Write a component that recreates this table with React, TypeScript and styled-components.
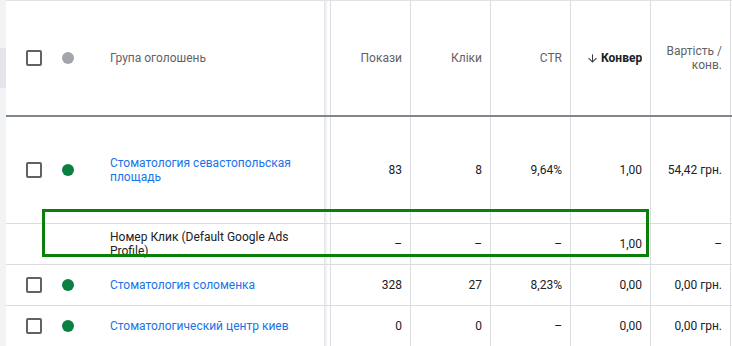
import React from 'react';
import styled, { createGlobalStyle } from 'styled-components';

const Global = createGlobalStyle`
  *, *::before, *::after { box-sizing: border-box; }
  html, body { margin: 0; padding: 0; background: #fff; }
  body { font-family: Roboto, "Noto Sans", Arial, sans-serif; }
`;

const COLS = '50px 54px 214px 6px repeat(5, 80px) 1fr';

const Page = styled.div`
  position: relative;
  display: flex;
  width: 732px;
  height: 346px;
  overflow: hidden;
  background: #fff;
`;

const Rail = styled.div`
  flex: none;
  width: 6px;
  background: #f1f3f4;
  display: flex;
  flex-direction: column;
  padding-top: 48px;
`;

const RailThumb = styled.div`
  height: 40px;
  background: #e4e6e9;
`;

const Table = styled.div`
  flex: 1;
  display: flex;
  flex-direction: column;
  border-top: 1px solid #e0e2e5;
  min-width: 0;
`;

const Row = styled.div<{ $h: number; $header?: boolean }>`
  flex: none;
  display: grid;
  grid-template-columns: ${COLS};
  height: ${(p) => p.$h}px;
  border-bottom: ${(p) => (p.$header ? '2px solid #80868b' : '1px solid #dadce0')};
  font-size: 12px;
  line-height: 14px;
  color: ${(p) => (p.$header ? '#5f6368' : '#202124')};
`;

const Cell = styled.div`
  display: flex;
  align-items: center;
  min-width: 0;
`;

const CheckCell = styled(Cell)`
  padding-left: 20px;
`;

const Checkbox = styled.span`
  display: block;
  width: 16px;
  height: 16px;
  border: 2px solid #5f6368;
  border-radius: 2px;
`;

const DotCell = styled(Cell)`
  padding-left: 6px;
`;

const Dot = styled.span<{ $color: string }>`
  display: block;
  width: 12px;
  height: 12px;
  border-radius: 50%;
  background: ${(p) => p.$color};
`;

const NameCell = styled(Cell)`
  padding-right: 16px;
`;

const NameLink = styled.span`
  color: #1a73e8;
`;

const FrozenEdge = styled.div`
  background: linear-gradient(to right, #e3e5e8 0px, #eef0f1 2px, #f8f9fa 3px, #fff 4px);
`;

const Metric = styled(Cell)<{ $padLeft?: number }>`
  border-left: 1px solid #dadce0;
  justify-content: flex-end;
  text-align: right;
  padding: 0 8px 0 ${(p) => p.$padLeft ?? 8}px;
`;

const Tail = styled.div`
  border-left: 1px solid #dadce0;
`;

const SortLabel = styled.span`
  display: flex;
  align-items: center;
  gap: 2px;
  min-width: 0;
  color: #202124;
  font-weight: 700;
`;

const SortText = styled.span`
  min-width: 0;
  overflow: hidden;
  white-space: nowrap;
`;

const ArrowIcon = styled.svg`
  flex: none;
  width: 13px;
  height: 13px;
`;

const Highlight = styled.div`
  position: absolute;
  left: 42px;
  top: 209px;
  width: 607px;
  height: 48px;
  border: 3px solid #0a7f0a;
  pointer-events: none;
`;

type DataRow = {
  name: string;
  sub?: boolean;
  h: number;
  values: string[];
};

const rows: DataRow[] = [
  { name: 'Стоматология севастопольская площадь', h: 107, values: ['83', '8', '9,64%', '1,00', '54,42 грн.'] },
  { name: 'Номер Клик (Default Google Ads Profile)', sub: true, h: 41, values: ['–', '–', '–', '1,00', '–'] },
  { name: 'Стоматология соломенка', h: 41, values: ['328', '27', '8,23%', '0,00', '0,00 грн.'] },
  { name: 'Стоматологический центр киев', h: 41, values: ['0', '0', '–', '0,00', '0,00 грн.'] },
];

export default function App() {
  return (
    <>
      <Global />
      <Page>
        <Rail>
          <RailThumb />
        </Rail>
        <Table>
          <Row $h={116} $header>
            <CheckCell>
              <Checkbox />
            </CheckCell>
            <DotCell>
              <Dot $color="#a2a5a9" />
            </DotCell>
            <NameCell>Група оголошень</NameCell>
            <FrozenEdge />
            <Metric>Покази</Metric>
            <Metric>Кліки</Metric>
            <Metric>CTR</Metric>
            <Metric $padLeft={15}>
              <SortLabel>
                <ArrowIcon viewBox="0 0 24 24">
                  <path
                    fill="#3c4043"
                    d="M20 12l-1.41-1.41L13 16.17V4h-2v12.17l-5.58-5.59L4 12l8 8 8-8z"
                  />
                </ArrowIcon>
                <SortText>Конверсії</SortText>
              </SortLabel>
            </Metric>
            <Metric>
              <span>Вартість / конв.</span>
            </Metric>
            <Tail />
          </Row>
          {rows.map((r) => (
            <Row key={r.name} $h={r.h}>
              <CheckCell>{!r.sub && <Checkbox />}</CheckCell>
              <DotCell>{!r.sub && <Dot $color="#0b8043" />}</DotCell>
              <NameCell>{r.sub ? <span>{r.name}</span> : <NameLink>{r.name}</NameLink>}</NameCell>
              <FrozenEdge />
              {r.values.map((v, i) => (
                <Metric key={i}>{v}</Metric>
              ))}
              <Tail />
            </Row>
          ))}
        </Table>
        <Highlight />
      </Page>
    </>
  );
}
